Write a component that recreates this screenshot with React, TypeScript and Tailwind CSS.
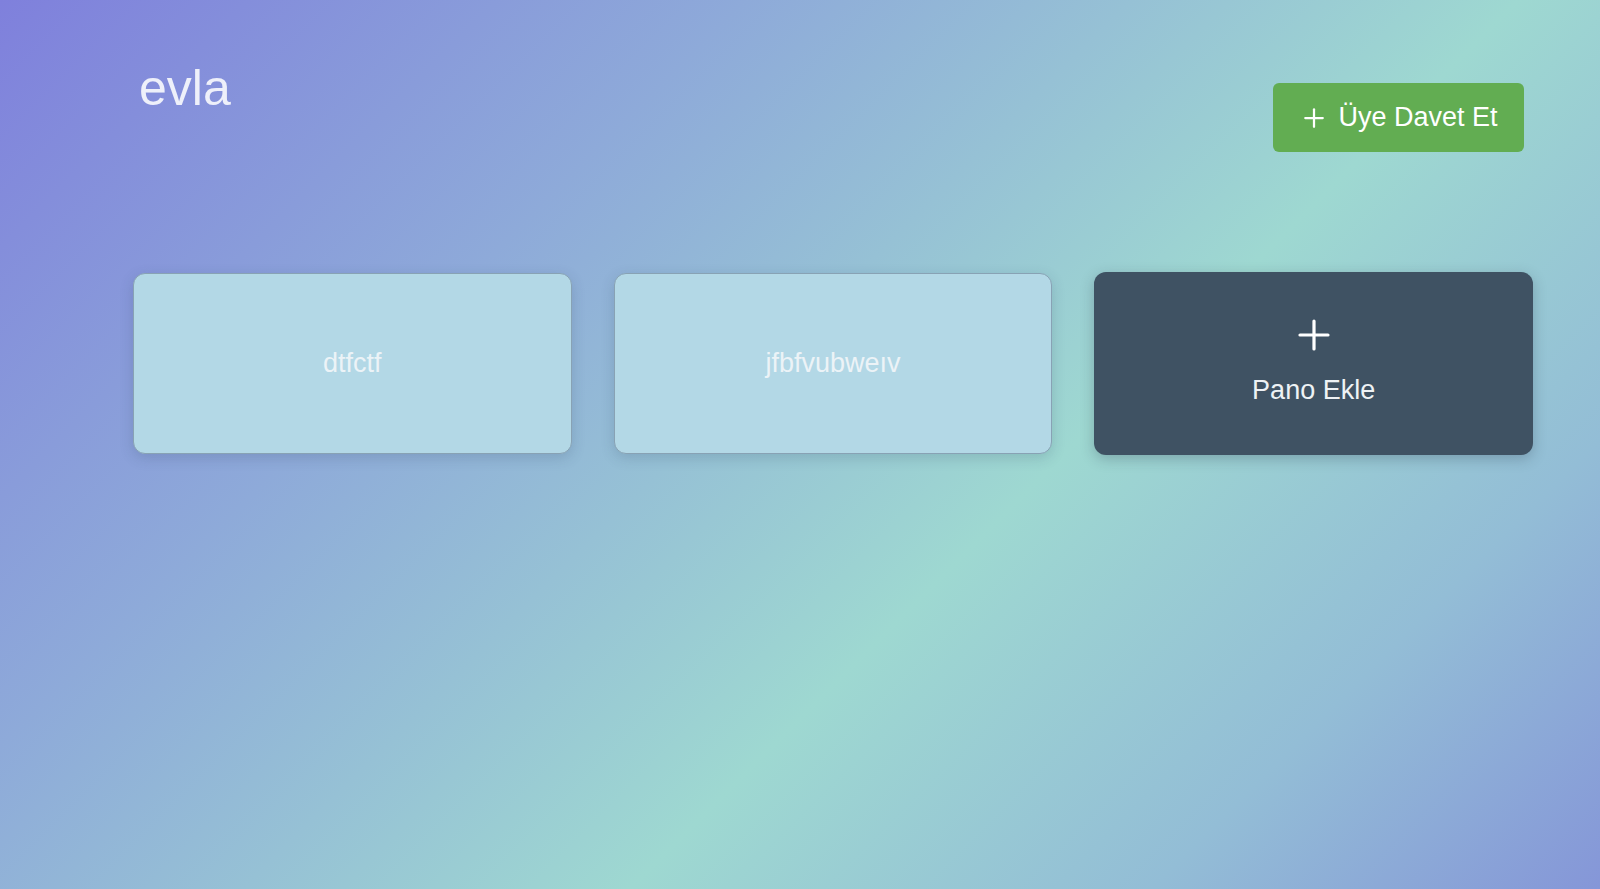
import { Plus } from "lucide-react";

const boards = [
  { id: "1", name: "dtfctf" },
  { id: "2", name: "jfbfvubweıv" },
];

export default function App() {
  return (
    <div className="min-h-screen bg-[linear-gradient(135deg,#7f80dc_0%,#8eaad9_30%,#9ed8d1_61%,#93bdd6_82%,#8596d8_100%)] font-['Liberation_Sans',Arial,sans-serif]">
      <header className="flex items-start justify-between pl-[139px] pr-[76px] pt-[60px]">
        <h1 className="text-[50px] font-normal leading-[1.15] text-[#eef0fa]">evla</h1>
        <button className="mt-[23px] flex h-[69px] w-[251px] items-center justify-center gap-[9px] rounded-md bg-[#62ad52] text-[27px] text-white">
          <Plus className="h-[30px] w-[30px]" strokeWidth={1.8} />
          <span>Üye Davet Et</span>
        </button>
      </header>

      <div className="ml-[133px] mt-[120px] grid w-[1400px] grid-cols-3 items-center gap-[42px]">
        {boards.map((board) => (
          <div
            className="flex h-[181px] items-center justify-center rounded-xl border border-[#88a2b4] bg-[#b3d8e6] shadow-[0_4px_14px_rgba(40,60,90,0.18)]"
            key={board.id}
          >
            <span className="text-[27px] text-[#ecf3f7]">{board.name}</span>
          </div>
        ))}
        <button className="flex h-[183px] flex-col items-center justify-center rounded-xl bg-[#3f5263] pb-[10px] text-white shadow-[0_4px_14px_rgba(30,40,60,0.25)]">
          <Plus className="h-[48px] w-[48px]" strokeWidth={1.6} />
          <span className="mt-[16px] text-[27px] leading-[1.15] text-[#eef2f5]">Pano Ekle</span>
        </button>
      </div>
    </div>
  );
}
